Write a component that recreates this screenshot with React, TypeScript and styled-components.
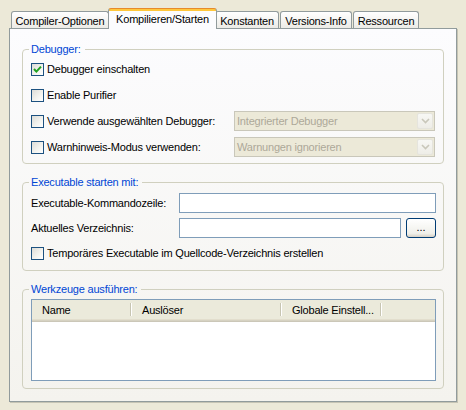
import React from "react";
import styled, { createGlobalStyle } from "styled-components";

const Global = createGlobalStyle`
  html, body { margin: 0; padding: 0; background: #ECE9D8; }
  body { font-family: "Liberation Sans", Arial, sans-serif; font-size: 11px; letter-spacing: -0.2px; color: #000; }
  * { box-sizing: border-box; }
`;

const Window = styled.div`
  width: 466px;
  height: 410px;
  padding: 8px 0 0 9px;
  background: #ECE9D8;
`;

const TabStrip = styled.div`
  display: flex;
  align-items: flex-end;
  height: 20px;
  padding-left: 2px;
  position: relative;
  z-index: 2;
`;

const Tab = styled.div<{ $active?: boolean; $w: number }>`
  width: ${(p) => p.$w}px;
  height: ${(p) => (p.$active ? 21 : 17)}px;
  margin: ${(p) => (p.$active ? "0 -2px -1px -2px" : "0 1px 0 0")};
  border: 1px solid #919B9C;
  border-bottom: none;
  border-top: ${(p) => (p.$active ? "1px solid #E68B2C" : "1px solid #919B9C")};
  border-radius: 3px 3px 0 0;
  background: ${(p) =>
    p.$active
      ? "linear-gradient(#FFC73C 0, #FFC73C 2px, #FCFCFE 2px, #FCFCFE 100%)"
      : "linear-gradient(#FFFFFF, #ECEBE6)"};
  display: flex;
  align-items: center;
  justify-content: center;
  padding-top: ${(p) => (p.$active ? 0 : 1)}px;
  padding-bottom: ${(p) => (p.$active ? 1 : 0)}px;
  white-space: nowrap;
  position: relative;
  z-index: ${(p) => (p.$active ? 3 : 1)};
`;

const Panel = styled.div`
  width: 448px;
  height: 374px;
  border: 1px solid #919B9C;
  box-shadow: 1px 1px 0 #C6C4B4;
  background: linear-gradient(#FCFCFE, #F4F3EE);
  padding: 14px 12px 0 12px;
  display: flex;
  flex-direction: column;
  gap: 12px;
  position: relative;
  z-index: 1;
`;

const Group = styled.fieldset<{ $pt: number; $pb: number; $pr: number }>`
  margin: 0;
  min-width: 0;
  border: 1px solid #D0D0BF;
  border-radius: 4px;
  padding: ${(p) => p.$pt}px ${(p) => p.$pr}px ${(p) => p.$pb}px 8px;
`;

const Legend = styled.legend`
  color: #0046D5;
  padding: 0 4px 0 2px;
  margin-left: -2px;
  line-height: 13px;
  height: 13px;
`;

const Rows = styled.div<{ $gap: number }>`
  display: flex;
  flex-direction: column;
  gap: ${(p) => p.$gap}px;
`;

const Row = styled.div`
  display: flex;
  align-items: center;
  height: 20px;
`;

const CheckLabel = styled.label`
  display: flex;
  align-items: center;
  gap: 3px;
  white-space: nowrap;
`;

const Box = styled.span`
  width: 13px;
  height: 13px;
  border: 1px solid #1C5180;
  background: linear-gradient(135deg, #DCDCD7 0%, #F4F4F0 60%, #FFFFFF 100%);
  display: inline-flex;
  align-items: center;
  justify-content: center;
  flex: none;
`;

const Combo = styled.div`
  margin-left: auto;
  width: 201px;
  height: 20px;
  border: 1px solid #C9C7BA;
  background: #ECE9D8;
  color: #ACA899;
  display: flex;
  align-items: center;
  padding: 1px 1px 1px 2px;
`;

const ComboText = styled.span`
  flex: 1;
  white-space: nowrap;
`;

const ComboButton = styled.span`
  width: 16px;
  height: 16px;
  border: 1px solid #E5E4DD;
  border-radius: 2px;
  background: linear-gradient(#F7F7F4, #EEEDE7);
  display: flex;
  align-items: center;
  justify-content: center;
`;

const FormGrid = styled.div`
  display: grid;
  grid-template-columns: 148px 1fr;
  row-gap: 5px;
  align-items: center;
`;

const FieldLabel = styled.span`
  white-space: nowrap;
`;

const Input = styled.div`
  height: 20px;
  border: 1px solid #7F9DB9;
  background: #FFFFFF;
`;

const InputWithButton = styled.div`
  display: flex;
  gap: 5px;
  align-items: center;
`;

const Grow = styled(Input)`
  flex: 1;
`;

const SmallButton = styled.button`
  width: 30px;
  height: 20px;
  border: 1px solid #003C74;
  border-radius: 3px;
  background: linear-gradient(#FFFFFF, #F0F0EA 80%, #D6D0C5);
  font: inherit;
  font-size: 11px;
  padding: 0 0 3px 0;
  line-height: 14px;
  color: #000;
`;

const SpanRow = styled(Row)`
  grid-column: 1 / span 2;
`;

const List = styled.div`
  height: 82px;
  border: 1px solid #7F9DB9;
  background: #FFFFFF;
`;

const Header = styled.div`
  display: flex;
  height: 22px;
  background: #EBEADB;
  box-shadow: inset 0 -1px #CBC7B8, inset 0 -2px #D6D2C2, inset 0 -3px #E2DECD;
  padding-bottom: 3px;
`;

const HeadCell = styled.div<{ $w: number }>`
  width: ${(p) => p.$w}px;
  display: flex;
  align-items: center;
  padding-left: 10px;
  white-space: nowrap;
  background:
    linear-gradient(#C7C5B2, #C7C5B2) right 1px center / 1px 13px no-repeat,
    linear-gradient(#FFFFFF, #FFFFFF) right 0 center / 1px 13px no-repeat;
`;

const Check = () => (
  <svg width="9" height="9" viewBox="0 0 9 9">
    <path d="M1 4 L3.4 6.6 L8 1.6" fill="none" stroke="#21A121" strokeWidth="2" />
  </svg>
);

const Chevron = () => (
  <svg width="9" height="6" viewBox="0 0 9 6">
    <path d="M1 1 L4.5 4.5 L8 1" fill="none" stroke="#C9C7BA" strokeWidth="1.6" />
  </svg>
);

const CheckBox = ({ checked, label }: { checked?: boolean; label: string }) => (
  <CheckLabel>
    <Box>{checked && <Check />}</Box>
    <span>{label}</span>
  </CheckLabel>
);

const ComboBox = ({ text }: { text: string }) => (
  <Combo>
    <ComboText>{text}</ComboText>
    <ComboButton>
      <Chevron />
    </ComboButton>
  </Combo>
);

const tabs = [
  { label: "Compiler-Optionen", w: 98 },
  { label: "Kompilieren/Starten", w: 109, active: true },
  { label: "Konstanten", w: 64 },
  { label: "Versions-Info", w: 72 },
  { label: "Ressourcen", w: 66 },
];

export default function App() {
  return (
    <Window>
      <Global />
      <TabStrip>
        {tabs.map((t) => (
          <Tab key={t.label} $active={t.active} $w={t.w}>
            {t.label}
          </Tab>
        ))}
      </TabStrip>
      <Panel>
        <Group $pt={3} $pb={6} $pr={8}>
          <Legend>Debugger:</Legend>
          <Rows $gap={6}>
            <Row>
              <CheckBox checked label="Debugger einschalten" />
            </Row>
            <Row>
              <CheckBox label="Enable Purifier" />
            </Row>
            <Row>
              <CheckBox label="Verwende ausgewählten Debugger:" />
              <ComboBox text="Integrierter Debugger" />
            </Row>
            <Row>
              <CheckBox label="Warnhinweis-Modus verwenden:" />
              <ComboBox text="Warnungen ignorieren" />
            </Row>
          </Rows>
        </Group>
        <Group $pt={4} $pb={7} $pr={7}>
          <Legend>Executable starten mit:</Legend>
          <FormGrid>
            <FieldLabel>Executable-Kommandozeile:</FieldLabel>
            <Input />
            <FieldLabel>Aktuelles Verzeichnis:</FieldLabel>
            <InputWithButton>
              <Grow />
              <SmallButton>...</SmallButton>
            </InputWithButton>
            <SpanRow>
              <CheckBox label="Temporäres Executable im Quellcode-Verzeichnis erstellen" />
            </SpanRow>
          </FormGrid>
        </Group>
        <Group $pt={3} $pb={7} $pr={7}>
          <Legend>Werkzeuge ausführen:</Legend>
          <List>
            <Header>
              <HeadCell $w={100}>Name</HeadCell>
              <HeadCell $w={150}>Auslöser</HeadCell>
              <HeadCell $w={100}>Globale Einstell...</HeadCell>
            </Header>
          </List>
        </Group>
      </Panel>
    </Window>
  );
}
